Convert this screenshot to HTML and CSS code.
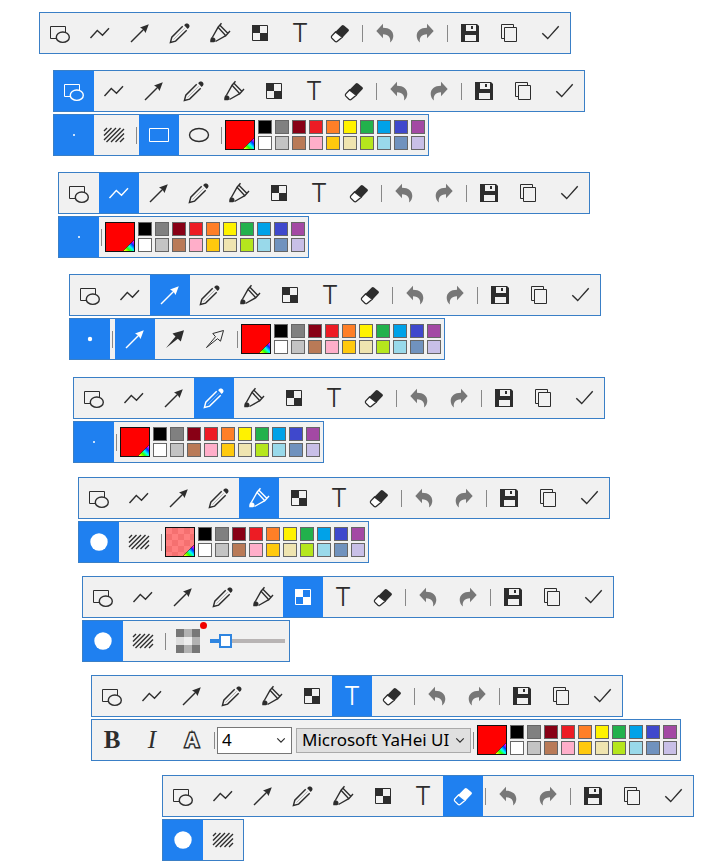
FILE: index.html
```html
<!DOCTYPE html>
<html lang="en">
<head>
<meta charset="utf-8">
<title>Capture toolbars</title>
<link rel="stylesheet" href="styles.css">
</head>
<body>
<svg class="sprite" aria-hidden="true">
  <symbol id="shape" viewBox="0 0 40 40"><path d="M17 25.500H10.500V13.500H25.500V19" class="thin"/><ellipse cx="22.800" cy="24.200" rx="6.500" ry="5.200" class="line"/></symbol>
  <symbol id="polyline" viewBox="0 0 40 40"><path d="M10.500 25L17.300 17.600L22.500 22.200L29 15.200" class="line"/></symbol>
  <symbol id="arrow" viewBox="0 0 40 40"><path d="M11 29L25 15" class="line"/><path d="M28.800 11.200L20 14.500L23.500 16.500L25.500 20Z" class="solid"/></symbol>
  <symbol id="pencil" viewBox="0 0 40 40"><path d="M22.700 13.300L11.800 24.200L10.400 29.500L15.600 28.100L26.700 17.300" class="line"/><path d="M13.500 26.500L24.700 15.300" class="faint"/><path d="M24.200 12.300C25 10.600 26.500 10 28 10.700C29.500 11.500 30 13.200 29 14.600L27.700 15.900Z" class="solid"/></symbol>
  <symbol id="marker" viewBox="0 0 40 40"><path d="M21.500 10.200L18 14.300L25.800 22.700L30 18M19.900 12.200L28 20.500M18 14.300L12.300 24.500M25.800 22.700L15.500 28.500" class="line"/><path d="M11.400 24.300C12.800 23.800 14.600 24.500 15.300 26C15.800 27.300 15.400 28.800 14 29.300H10.300C10 27.500 10.500 25.500 11.400 24.300Z" class="solid"/></symbol>
  <symbol id="mosaic" viewBox="0 0 40 40"><path d="M12.500 12.500H27.500V27.500H12.500Z" class="thin"/><path d="M12 12H20V20H12ZM20 20H28V28H20Z" class="solid"/></symbol>
  <symbol id="eraser" viewBox="0 0 40 40"><path d="M15.500 18.700L21.700 12.600Q22.800 11.600 24 12.600L28.500 16.300Q29.500 17.200 28.500 18.300L22.600 24.500Z" class="solid"/><path d="M15.500 19L11.800 22.900Q10.900 24 11.800 25.100L15 28.300Q16.200 29.300 17.400 28.300L22.200 24.300Z" class="rubber"/></symbol>
  <symbol id="undo" viewBox="0 0 40 40"><path d="M11.300 17.900L18 10.700V14.800C24.500 14.800 28.300 18 28.300 23C28.300 25.500 27 28 25 29.500C26 25 23.800 21.300 18 21.300V25.200Z" class="solid"/></symbol>
  <symbol id="redo" viewBox="0 0 40 40"><path d="M28.700 17.900L22 10.700V14.800C15.500 14.800 11.700 18 11.700 23C11.700 25.500 13 28 15 29.500C14 25 16.200 21.300 22 21.300V25.200Z" class="solid"/></symbol>
  <symbol id="save" viewBox="0 0 40 40"><path fill-rule="evenodd" d="M11 11H27L29 13V29H11ZM16 12V18H26V12ZM15 22V28H26V22Z" class="solid"/><path d="M21 13H23V16H21Z" class="solid"/></symbol>
  <symbol id="copy" viewBox="0 0 40 40"><path d="M14 25.500H11.500V11.500H23.500V14M14.500 14.500H26.500V28.500H14.500Z" class="thin"/></symbol>
  <symbol id="check" viewBox="0 0 40 40"><path d="M12.300 20.200L17.700 25.600L28.700 13.300" class="line"/></symbol>
  <symbol id="hatch" viewBox="0 0 40 40"><path d="M10 16L13 13M10 20.500L17.500 13M10 25L22 13M12.500 27L26.500 13M17 27L30 14M21.500 27L30 18.500M26 27L30 23" class="line"/></symbol>
  <symbol id="rectangle" viewBox="0 0 40 40"><path d="M10.500 13.500H29.500V26.500H10.500Z" class="thin"/></symbol>
  <symbol id="ellipse" viewBox="0 0 40 40"><ellipse cx="20" cy="20" rx="9.500" ry="6.500" class="line"/></symbol>
  <symbol id="dot-small" viewBox="0 0 40 40"><circle cx="20" cy="20" r="1" class="solid"/></symbol>
  <symbol id="dot-medium" viewBox="0 0 40 40"><circle cx="20" cy="20" r="2.200" class="solid"/></symbol>
  <symbol id="dot-large" viewBox="0 0 40 40"><circle cx="20" cy="20" r="8.700" class="solid"/></symbol>
  <symbol id="arrow-solid" viewBox="0 0 40 40"><path d="M11 29L20.500 17.500L17.500 14.500L29 11.200L25.800 22.500L22.800 19.800Z" class="solid"/></symbol>
  <symbol id="arrow-outline" viewBox="0 0 40 40"><path d="M11.500 28.500L20.500 17.700L17.800 14.500L28.500 11.500L25.500 22.200L22.500 19.700Z" class="thin"/></symbol>
  <symbol id="pixels" viewBox="0 0 24 24"><path fill="#dedede" d="M0 0H24V24H0Z"/><path fill="#777" d="M0 0H8V8H0ZM16 0H24V8H16ZM0 16H8V24H0ZM16 16H24V24H16Z"/><path fill="#b2b2b2" d="M8 0H16V8H8ZM16 8H24V16H16ZM8 16H16V24H8Z"/><path fill="#eee" d="M8 8H16V16H8Z"/></symbol>
  <symbol id="chevron" viewBox="0 0 12 8"><path d="M1.500 1.500L6 6L10.500 1.500" class="line"/></symbol>
</svg>
<main id="toolbars"></main>
<script src="app.js"></script>
</body>
</html>
```
FILE: styles.css
```css
* { box-sizing: border-box; }

body {
  --ink: #2d2d2d;
  --panel: #f1f1f1;
  --accent: #1f80f0;
  --edge: #3a7fc6;
  margin: 0;
  background: #fff;
  color: var(--ink);
  font-family: "Noto Sans", "Open Sans", sans-serif;
}

.sprite { position: absolute; width: 0; height: 0; }

.line, .thin, .faint { fill: none; stroke: currentColor; }
.line { stroke-width: 1.4; }
.thin { stroke-width: 1; }
.faint { stroke-width: 0.6; opacity: 0.5; }
.solid { fill: currentColor; }
.rubber { fill: var(--rubber, #fff); stroke: currentColor; stroke-width: 1.3; }

.group {
  display: flex;
  flex-direction: column;
  align-items: flex-start;
  gap: 2px;
}

.g1 { margin: 12px 0 0 39px; }
.g2 { margin: 16px 0 0 53px; }
.g3 { margin: 16px 0 0 58px; }
.g4 { margin: 16px 0 0 69px; }
.g5 { margin: 17px 0 0 73px; }
.g6 { margin: 14px 0 0 78px; }
.g7 { margin: 13px 0 0 82px; }
.g8 { margin: 13px 0 0 91px; }
.g9 { margin: 14px 0 0 162px; }

.bar {
  display: flex;
  align-items: center;
  border: 1px solid var(--edge);
  background: var(--panel);
}

.tool {
  display: grid;
  place-items: center;
  width: 40px;
  height: 40px;
  padding: 0;
  border: 0;
  background: none;
  color: var(--ink);
}

.tool svg { width: 40px; height: 40px; }
.tool:disabled { color: #777; }
.tool.active { background: var(--accent); color: #fff; --rubber: var(--accent); }

.letter { font: 300 26px/40px Inter, sans-serif; }
.bold { font: bold 25px/40px "Liberation Serif", serif; }
.italic { font: italic 25px/40px "Liberation Serif", serif; }
.outline {
  font: bold 20px/40px "Liberation Sans", sans-serif;
  color: var(--panel);
  -webkit-text-stroke: 3px var(--ink);
  paint-order: stroke fill;
}

.sep {
  width: 1px;
  height: 17px;
  margin: 0 2px;
  background: #888;
}

.colors {
  display: flex;
  gap: 3px;
  padding: 5px 3px 5px 1px;
}

.current {
  width: 30px;
  height: 30px;
  padding: 0;
  border: 1px solid #111;
  background: #f00;
  display: flex;
  align-items: flex-end;
  justify-content: flex-end;
}

.current.soft { background: repeating-conic-gradient(#f57070 0 25%, #ff7f7f 0 50%) 0 0 / 12px 12px; }

.rainbow {
  width: 11px;
  height: 11px;
  background: linear-gradient(to bottom right, transparent 46%, #111 46% 52%, transparent 52%),
    linear-gradient(to top right, #ff0 10%, #3f0 32%, #0ff 52%, #03f 72%, #f0f 90%);
  clip-path: polygon(100% 0, 100% 100%, 0 100%);
}

.palette {
  display: grid;
  grid-template-columns: repeat(10, 14px);
  gap: 2px 3px;
}

.swatch {
  height: 14px;
  padding: 0;
  border: 1px solid #666;
}

.strength {
  position: relative;
  display: grid;
  place-items: center;
  width: 40px;
  height: 40px;
}

.strength svg { width: 24px; height: 24px; }

.strength::after {
  content: "";
  position: absolute;
  top: 1px;
  right: 1px;
  width: 7px;
  height: 7px;
  border-radius: 50%;
  background: #f00000;
}

.slider {
  appearance: none;
  width: 75px;
  height: 14px;
  margin: 0 4px 0 2px;
  background: linear-gradient(to right, #2f85e0 12px, #b8b4b4 12px) center / 100% 4px no-repeat;
}

.slider::-webkit-slider-thumb {
  appearance: none;
  width: 13px;
  height: 14px;
  border: 2px solid #2f85e0;
  background: #fff;
}

.field { display: grid; align-items: center; }
.field > * { grid-area: 1 / 1; }

.field select {
  appearance: none;
  width: 100%;
  height: 100%;
  margin: 0;
  padding: 0 5px;
  border: 1px solid #aaa;
  border-radius: 0;
  background: #e0e0e0;
  color: #000;
  font: 17px/22px "Noto Sans", "Open Sans", sans-serif;
}

.field svg {
  width: 10px;
  height: 7px;
  margin-right: 6px;
  justify-self: end;
  pointer-events: none;
}

.size { width: 75px; height: 27px; }
.size select { padding: 0 4px; border-color: #777; background: #fff; }
.family { width: 175px; height: 25px; margin-left: 4px; }
```
FILE: app.js
```js
const icon = (name) => `<svg aria-hidden="true"><use href="#${name}"/></svg>`;
const sep = '<span class="sep"></span>';

const tool = (name, active = false) => {
  const off = name === "undo" || name === "redo" ? " disabled" : "";
  const face = name === "text" ? '<span class="letter">T</span>' : icon(name);
  return `<button type="button" class="tool${active ? " active" : ""}" aria-label="${name}"${off}>${face}</button>`;
};

const letter = (style, text) =>
  `<button type="button" class="tool" aria-label="${style}"><span class="${style}">${text}</span></button>`;

const palette = [
  "#000000", "#808080", "#880015", "#ed1c24", "#ff7f27", "#fff200", "#22b14c", "#00a2e8", "#3f48cc", "#a349a4",
  "#ffffff", "#c3c3c3", "#b97a57", "#ffaec9", "#ffc90e", "#efe4b0", "#b5e61d", "#99d9ea", "#7092be", "#c8bfe7",
];

const colors = (soft = false) => `<div class="colors">
  <button type="button" class="current${soft ? " soft" : ""}" aria-label="current color"><span class="rainbow"></span></button>
  <div class="palette">${palette
    .map((c) => `<button type="button" class="swatch" aria-label="${c}" style="background:${c}"></button>`)
    .join("")}</div></div>`;

const mainBar = (selected) => {
  const row = (names) => names.map((n) => tool(n, n === selected)).join("");
  return `<div class="bar" role="toolbar">${row(["shape", "polyline", "arrow", "pencil", "marker", "mosaic", "text", "eraser"])}${sep}${row(["undo", "redo"])}${sep}${row(["save", "copy", "check"])}</div>`;
};

const textOptions = letter("bold", "B") + letter("italic", "I") + letter("outline", "A") + sep +
  `<label class="field size"><select aria-label="Font size"><option>4</option></select>${icon("chevron")}</label>
   <label class="field family"><select aria-label="Font family"><option>Microsoft YaHei UI</option></select>${icon("chevron")}</label>` +
  sep + colors();

const groups = [
  ["", ""],
  ["shape", tool("dot-small", true) + tool("hatch") + sep + tool("rectangle", true) + tool("ellipse") + sep + colors()],
  ["polyline", tool("dot-small", true) + sep + colors()],
  ["arrow", tool("dot-medium", true) + sep + tool("arrow", true) + tool("arrow-solid") + tool("arrow-outline") + sep + colors()],
  ["pencil", tool("dot-small", true) + sep + colors()],
  ["marker", tool("dot-large", true) + tool("hatch") + sep + colors(true)],
  ["mosaic", tool("dot-large", true) + tool("hatch") + sep +
    `<span class="strength">${icon("pixels")}</span><input class="slider" type="range" aria-label="Mosaic size" min="0" max="100" value="15">`],
  ["text", textOptions],
  ["eraser", tool("dot-large", true) + tool("hatch")],
];

document.getElementById("toolbars").innerHTML = groups
  .map(([selected, options], i) =>
    `<section class="group g${i + 1}">${mainBar(selected)}${options && `<div class="bar">${options}</div>`}</section>`)
  .join("");
```
